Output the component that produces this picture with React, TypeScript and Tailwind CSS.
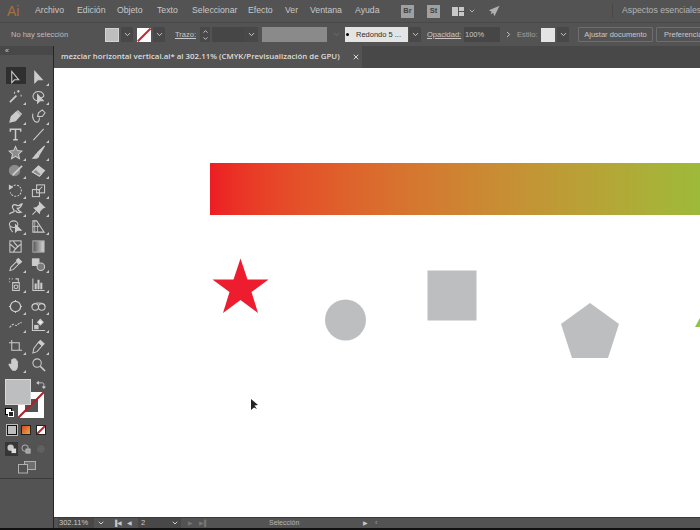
import type { ReactNode } from "react";
import { ChevronDown, ChevronUp, ChevronRight, X } from "lucide-react";

const ui = "font-['Liberation_Sans',Arial,sans-serif]";

const Ico = ({ children, corner = true }: { children: ReactNode; corner?: boolean }) => (
  <div className="relative w-[20px] h-[18px] flex items-center justify-center">
    <svg width="15" height="15" viewBox="0 0 16 16" fill="none" stroke="#cccccc" strokeWidth="1.1">
      {children}
    </svg>
    {corner && <span className="absolute right-[-1px] bottom-0 w-0 h-0 border-l-[3px] border-l-transparent border-b-[3px] border-b-[#c8c8c8]" />}
  </div>
);

const F = "#cccccc";

const rows: ReactNode[][] = [
  [
    <Ico corner={false}><path d="M4 1.500v12l3-3 4.500 0z" /></Ico>,
    <Ico><path d="M4 1.500v12l3-3 5 0z" fill={F} /></Ico>,
  ],
  [
    <Ico><path d="M2 14 9 7" strokeWidth="1.800" /><path d="M11 1v3M9.500 2.500h3M14 6v2M7 3v2" /></Ico>,
    <Ico><path d="M8 13C2 12 1 8 3 5s8-3 10 0-1 5-4 4" /><path d="M7 6v9l2.500-2.500H13z" fill={F} /></Ico>,
  ],
  [
    <Ico><path d="M2 14l1.500-6L9 3l4 4-5 5.500z" fill={F} /><path d="M10 1.500l4.500 4.500" strokeWidth="1.600" /></Ico>,
    <Ico><path d="M2 5c-1 4 1 9 4 9s3-3 3-5" /><path d="M7 8l1-4 4-3 3 3-3 4z" /></Ico>,
  ],
  [
    <Ico><path d="M2.500 5V2.500h11V5M8 2.500v11M5.500 13.500h5" strokeWidth="1.600" /></Ico>,
    <Ico><path d="M2.500 14 13.500 2" /></Ico>,
  ],
  [
    <Ico><path d="M8 1.500l2 4.500 4.800.5-3.600 3.200 1 4.800L8 12l-4.200 2.500 1-4.800L1.200 6.500 6 6z" fill="#8d8d8d" /></Ico>,
    <Ico><path d="M14.500 1 7 8l2 2z" fill={F} /><path d="M6.500 9c-2 .5-1.500 3-4.500 5 3 .5 6-.5 6.500-3z" fill={F} /></Ico>,
  ],
  [
    <Ico><circle cx="7" cy="8" r="5.500" fill="#8d8d8d" stroke="#8d8d8d" /><path d="M5 13 15 3" strokeWidth="1.800" /></Ico>,
    <Ico><path d="M1.500 9.500 8 3l6.500 5-5.500 6z" fill={F} /><path d="M1.500 9.500 5 6.500l6 5.500-2 2z" fill="#8d8d8d" /></Ico>,
  ],
  [
    <Ico><path d="M3.500 4.500A6 6 0 1 1 2.500 10" strokeDasharray="2 1.300" /><path d="M1.500 2.500l3 2-3 2z" fill={F} /></Ico>,
    <Ico><rect x="1.500" y="7" width="7.500" height="7.500" /><rect x="6" y="2" width="8.500" height="8.500" /><path d="M8 8l4-4" /></Ico>,
  ],
  [
    <Ico><path d="M1.500 14c2-3 4-1 5-3S3 8 5 5s4 0 6 0 2-2 4-2c-1 3-3 5-5 5 1 2 2 3 4 4-3 1-5 0-6-2" strokeWidth="1.400" /></Ico>,
    <Ico><path d="M9 1.500l5.500 5.500-2 .5-3 3-.5 2.500L3.500 7.500 6 7l3-3z" fill={F} /><path d="M5.500 10.500 1.500 14.500" /></Ico>,
  ],
  [
    <Ico><ellipse cx="6" cy="5.500" rx="4.500" ry="3.500" /><path d="M5 14c-1-2-3-3-3-6" /><path d="M8 6v8l2-2h4z" fill={F} /></Ico>,
    <Ico><path d="M2 2v12h12L6 2z" /><path d="M2 8l7 0M4 2v12M7 6v8" strokeWidth=".8" /></Ico>,
  ],
  [
    <Ico corner={false}><rect x="2" y="2" width="12" height="12" /><path d="M2 6c3 0 4 4 6 4s3-4 6-4M6 2c0 3 4 4 4 6s-4 3-4 6" strokeWidth="1.200" /></Ico>,
    <Ico corner={false}>
      <defs>
        <linearGradient id="toolgrad" x1="0" x2="1">
          <stop offset="0" stopColor="#555555" />
          <stop offset="1" stopColor="#d8d8d8" />
        </linearGradient>
      </defs>
      <rect x="2" y="2" width="12" height="12" fill="url(#toolgrad)" stroke="#aaaaaa" />
    </Ico>,
  ],
  [
    <Ico><path d="M2 14.500l1-3.500 6-6 2.500 2.500-6 6z" /><path d="M9 3.500l2-2 3.500 3.500-2 2z" fill={F} /></Ico>,
    <Ico><rect x="1.500" y="2" width="7" height="7" fill={F} /><circle cx="10.500" cy="10.500" r="4" fill="#7a7a7a" /></Ico>,
  ],
  [
    <Ico><path d="M1 2h1M4 2h1M1 5h1M8 2h3v3M5 6h7v8.500H5z" /><circle cx="8.500" cy="10.500" r="2" /></Ico>,
    <Ico><path d="M2 1.500v13h12.500" /><path d="M5 13V7M8 13V3M11 13V6" strokeWidth="2.200" /></Ico>,
  ],
  [
    <Ico><circle cx="8" cy="8" r="5.500" strokeWidth="1.400" /><path d="M8 1v2M1 8h2M13 8h2M8 13v2" /></Ico>,
    <Ico><circle cx="4.500" cy="8.500" r="3.500" /><circle cx="11.500" cy="8.500" r="3.500" /><path d="M1 8c0-5 14-5 14 0" /></Ico>,
  ],
  [
    <Ico><path d="M1.500 11c2-1 3-4 5-3s2 2 4 0 3-2 4-2" strokeDasharray="2.500 1" /></Ico>,
    <Ico><path d="M1.500 2v12.500H15" /><rect x="4" y="9" width="3.500" height="3.500" fill={F} /><path d="M10 2.500l3 3-3 3-3-3z" fill="#eeeeee" /></Ico>,
  ],
  [
    <Ico><path d="M4 1v11h11M1 4h11v8" /></Ico>,
    <Ico><path d="M2 15l1-5 5-6.500 4 3.500-5.500 6.500z" /><path d="M8 3.500l2-2 4 3.500-2 2z" fill={F} /></Ico>,
  ],
  [
    <Ico>
      <path d="M5 14c-2-2-3-4-4-6 1-1 2 0 3 1V3.500c0-1 1.500-1 1.500 0V7V2.500c0-1 1.500-1 1.500 0V7V3c0-1 1.500-1 1.500 0v4.500V5c0-1 1.500-1 1.500 0v5c0 2-1 3-2 4z" fill={F} />
    </Ico>,
    <Ico corner={false}><circle cx="6.500" cy="6.500" r="4.500" /><path d="M10 10l5 5" strokeWidth="1.600" /></Ico>,
  ],
];

// vertical gap above each row, read off the reference
const tops = [
  "mt-0", "mt-px", "mt-[2px]", "mt-0", "mt-0", "mt-0", "mt-[2px]", "mt-0",
  "mt-0", "mt-[2px]", "mt-0", "mt-[2px]", "mt-[4px]", "mt-0", "mt-[4px]", "mt-0",
];

const Toolbar = () => (
  <aside className="w-[54px] shrink-0 bg-[#535353] border-r-[1px] border-r-[#262626] flex flex-col">
    <div className="h-[9px] bg-[#484848] text-[7px] leading-[9px] text-[#cfcfcf] pl-[5px] tracking-[-1px]">«</div>
    <div className="h-[13px]" />
    <div className="flex flex-col px-[5px]">
      {rows.map((r, i) => (
        <div key={i} className={`flex justify-between ${tops[i]} ${i === 0 ? "relative" : ""}`}>
          {i === 0 && <span className="absolute left-[1px] -top-[1px] w-[20px] h-[17px] bg-[#2f2f2f]" />}
          <div className="relative">{r[0]}</div>
          <div className="relative">{r[1]}</div>
        </div>
      ))}
    </div>
    <div className="relative h-[41px] mt-[6px] ml-[5px]">
      <div className="relative w-[40px] h-[40px]">
        <div className="absolute left-[13px] top-[13px] w-[26px] h-[26px] bg-white flex items-center justify-center overflow-hidden">
          <span className="w-[13px] h-[13px] bg-[#535353]" />
          <span className="absolute left-[-6px] top-[12px] w-[38px] h-[2px] bg-[#a8232a] -rotate-45" />
        </div>
        <div className="absolute left-0 top-0 w-[26px] h-[26px] bg-[#bcbec0] border-[1px] border-[#d8d8d8]" />
        <svg className="absolute left-[31px] top-[1px]" width="10" height="10" viewBox="0 0 14 12" fill="none" stroke="#cccccc" strokeWidth="1.200">
          <path d="M2 3h7c1.500 0 2 1 2 2v4" />
          <path d="M1 3l2.500-2v4zM11 11l-2-2.500h4z" fill="#cccccc" />
        </svg>
        <div className="absolute left-0 top-[29px] w-[7px] h-[7px] bg-white border-[1px] border-black" />
        <div className="absolute left-[3px] top-[32px] w-[6px] h-[6px] bg-[#222222] border-[1px] border-white" />
      </div>
    </div>
    <div className="flex mt-[5px] ml-[7px]">
      <span className="w-[10px] h-[10px] bg-[#bcbec0] border-[1px] border-[#111111] outline-[1px] outline-[#bbbbbb]" />
      <span className="ml-[4px] w-[10px] h-[10px] bg-gradient-to-br from-[#d8412a] to-[#e2a93b] border-[1px] border-[#222222]" />
      <span className="relative ml-[5px] w-[10px] h-[10px] bg-white border-[1px] border-[#222222] overflow-hidden">
        <span className="absolute left-[-3px] top-[3px] w-[14px] h-[2px] bg-[#c1272d] -rotate-45" />
      </span>
    </div>
    <div className="flex items-center mt-[7px] ml-[5px] h-[14px]">
      <div className="w-[13px] h-[14px] bg-[#363636] flex items-center justify-center">
        <svg width="10" height="10" viewBox="0 0 11 11"><circle cx="4" cy="4" r="3.500" fill="#c8c8c8" /><rect x="5" y="5" width="5" height="5" fill="#dddddd" /></svg>
      </div>
      <div className="w-[15px] flex justify-center">
        <svg width="10" height="10" viewBox="0 0 11 11" fill="none" stroke="#bbbbbb"><circle cx="4.500" cy="4.500" r="3.500" /><rect x="5.500" y="5.500" width="4.500" height="4.500" fill="#a0a0a0" /></svg>
      </div>
      <div className="w-[15px] flex justify-center">
        <svg width="8" height="8" viewBox="0 0 9 9" fill="none" stroke="#6f6f6f"><circle cx="4.500" cy="4.500" r="3.500" /><circle cx="4.500" cy="4.500" r="1.500" /></svg>
      </div>
    </div>
    <div className="mt-[5px] ml-[18px]">
      <svg className="block" width="18" height="13" viewBox="0 0 18 13" fill="none" stroke="#b0b0b0">
        <rect x="6.500" y=".5" width="11" height="8" fill="#6e6e6e" />
        <rect x=".5" y="3.500" width="9" height="8.500" fill="#535353" />
      </svg>
    </div>
    <div className="h-px bg-[#3c3c3c] mt-[4px]" />
  </aside>
);

const Chev = ({ className = "" }: { className?: string }) => (
  <span className={`w-[12px] h-[15px] bg-[#484848] flex items-center justify-center ${className}`}>
    <ChevronDown size={9} strokeWidth={2.5} color="#d0d0d0" />
  </span>
);

const menus = [
  { label: "Archivo", cls: "w-[42px]" },
  { label: "Edición", cls: "w-[40px]" },
  { label: "Objeto", cls: "w-[40px]" },
  { label: "Texto", cls: "w-[35px]" },
  { label: "Seleccionar", cls: "w-[56px]" },
  { label: "Efecto", cls: "w-[37px]" },
  { label: "Ver", cls: "w-[25px]" },
  { label: "Ventana", cls: "w-[45px]" },
  { label: "Ayuda", cls: "w-[35px]" },
];

const MenuBar = () => (
  <header className="h-[22px] bg-[#535353] flex items-center text-[8.700px] text-[#c8c8c8] whitespace-nowrap [&>*]:shrink-0">
    <span className="ml-[7px] w-[28px] text-[14px] text-[#a8703f] leading-none">Ai</span>
    {menus.map((m) => (
      <span key={m.label} className={m.cls}>{m.label}</span>
    ))}
    <span className="w-[13px] h-[13px] ml-[11px] bg-[#a0a0a0] text-[#3f3f3f] text-[7.500px] font-bold flex items-center justify-center">Br</span>
    <span className="ml-[13px] w-[13px] h-[13px] bg-[#a0a0a0] text-[#3f3f3f] text-[7.500px] font-bold flex items-center justify-center">St</span>
    <span className="ml-[12px] flex gap-px w-[12px] h-[9px]">
      <span className="w-[6px] bg-[#c8c8c8]" />
      <span className="flex-1 flex flex-col gap-px">
        <span className="flex-1 bg-[#c8c8c8]" />
        <span className="flex-1 bg-[#c8c8c8]" />
      </span>
    </span>
    <ChevronDown className="ml-[4px]" size={8} strokeWidth={2.5} color="#c0c0c0" />
    <svg className="ml-[12px]" width="12" height="12" viewBox="0 0 14 14" fill="#b0b0b0">
      <path d="M13.500 1 1 6l3 1.500L3.500 11 6 9l1.500 4z" />
    </svg>
    <span className="w-px h-[14px] bg-[#474747] ml-[112px]" />
    <span className="ml-[9px] text-[#b4b4b4]">Aspectos esenciales</span>
  </header>
);

const ControlBar = () => (
  <div className="h-[24px] bg-[#535353] border-t-[1px] border-t-[#484848] flex items-center text-[7.500px] text-[#c8c8c8] whitespace-nowrap overflow-hidden [&>*]:shrink-0">
    <span className="ml-[11px] w-[94px] text-[#bcbcbc]">No hay selección</span>
    <span className="w-[14px] h-[14px] bg-[#bcbec0] border-[1px] border-[#d4d4d4]" />
    <Chev className="ml-[2px]" />
    <span className="relative ml-[4px] w-[14px] h-[14px] bg-white overflow-hidden">
      <span className="absolute left-[-2px] top-[6px] w-[18px] h-[1.500px] bg-[#c1272d] -rotate-45" />
    </span>
    <Chev className="ml-[2px]" />
    <span className="ml-[10px] w-[20px] underline">Trazo:</span>
    <span className="ml-[5px] w-[10px] h-[15px] bg-[#484848] flex flex-col items-center justify-center">
      <ChevronUp size={7} strokeWidth={3} color="#d0d0d0" />
      <ChevronDown size={7} strokeWidth={3} color="#d0d0d0" />
    </span>
    <span className="ml-[2px] w-[32px] h-[15px] bg-[#464646]" />
    <Chev className="ml-0 w-[14px]" />
    <span className="ml-[4px] w-[65px] h-[15px] bg-[#8a8a8a]" />
    <span className="w-[18px] h-[15px] flex items-center justify-center">
      <ChevronDown size={9} strokeWidth={2.5} color="#6f6f6f" />
    </span>
    <span className="w-[63px] h-[15px] bg-[#e4e4e4] text-[#2e2e2e] flex items-center">
      <span className="ml-[1px] w-[3px] h-[3px] rounded-full bg-black" />
      <span className="ml-[7px]">Redondo 5 ...</span>
    </span>
    <Chev className="ml-[1px]" />
    <span className="ml-[6px] w-[32px] underline">Opacidad:</span>
    <span className="ml-[5px] w-[36px] h-[15px] pl-[1px] bg-[#464646] flex items-center">100%</span>
    <span className="w-[17px] flex justify-center"><ChevronRight size={9} strokeWidth={2.5} color="#d0d0d0" /></span>
    <span className="w-[19px] text-[#a0a0a0]">Estilo:</span>
    <span className="ml-[5px] w-[14px] h-[14px] bg-[#e4e4e4]" />
    <Chev className="ml-[2px]" />
    <span className="ml-[9px] w-[75px] h-[15px] border-[1px] border-[#6e6e6e] rounded-[1px] flex items-center justify-center">Ajustar documento</span>
    <span className="ml-[3px] pl-[7px] w-[60px] h-[15px] border-[1px] border-[#6e6e6e] rounded-[1px] flex items-center overflow-hidden">Preferencias</span>
  </div>
);

const Canvas = () => (
  <div className="relative flex-1 bg-white overflow-hidden">
    <div className="absolute left-[156px] top-[95px] w-[490px] h-[52px] bg-gradient-to-r from-[#ed1c24] via-[#cf8232] to-[#9dba3a]" />
    <svg className="absolute left-0 top-0" width="646" height="449" viewBox="0 0 646 449">
      <path d="M186.500 190.500 193.500 211.500H214.500L197.500 224 204 245 186.500 232 169 245 175.500 224 158.500 211.500H179.500Z" fill="#ed1c2e" />
      <circle cx="291.500" cy="252" r="20.500" fill="#bcbec0" />
      <rect x="373.500" y="202.500" width="49" height="50" fill="#bcbec0" />
      <path d="M536 235 565 256 554 290H518L507 256Z" fill="#bcbec0" />
      <path d="M646 250V259H641Z" fill="#8cc63f" />
      <path d="M197 331V342L200 339.500 203 341 200.500 337.500 204 337Z" fill="#222222" />
    </svg>
  </div>
);

const StatusBar = () => (
  <div className="h-[11px] bg-[#535353] border-t-[1px] border-t-[#3a3a3a] flex items-center text-[7.500px] text-[#c8c8c8] whitespace-nowrap [&>*]:shrink-0">
    <span className="ml-[4px] w-[36px] h-[10px] bg-[#484848] pl-px leading-[10px]">302.11%</span>
    <span className="w-[14px] flex justify-center"><ChevronDown size={8} strokeWidth={3} color="#d0d0d0" /></span>
    <span className="ml-[5px] w-[14px] text-[6px]">▐◀</span>
    <span className="w-[10px] text-[6px]">◀</span>
    <span className="ml-[1px] w-[30px] h-[10px] bg-[#484848] pl-[3px] leading-[10px]">2</span>
    <span className="w-[13px] h-[10px] bg-[#484848] flex justify-center items-center"><ChevronDown size={8} strokeWidth={3} color="#d0d0d0" /></span>
    <span className="ml-[7px] w-[11px] text-[6px] text-[#777777]">▶</span>
    <span className="w-[70px] text-[6px] text-[#777777]">▶▌</span>
    <span className="w-[94px] text-[#b4b4b4] text-[7px]">Selección</span>
    <span className="w-[12px] text-[6px]">▶</span>
    <span className="text-[#a0a0a0]">‹</span>
  </div>
);

export default function App() {
  return (
    <div className={`w-[700px] h-[530px] overflow-hidden flex flex-col bg-[#535353] ${ui}`}>
      <MenuBar />
      <ControlBar />
      <div className="flex-1 flex min-h-0">
        <Toolbar />
        <div className="flex-1 flex flex-col min-w-0">
          <div className="h-[22px] bg-[#484848] flex items-center">
            <div className="w-[308px] h-full bg-[#535353] flex items-center pl-[7px] font-['Open_Sans',sans-serif] text-[7.850px] font-semibold text-[#dcdcdc] whitespace-nowrap">
              mezclar horizontal vertical.ai* al 302.11% (CMYK/Previsualización de GPU)
              <X className="ml-[12px] shrink-0" size={8} strokeWidth={3} color="#d8d8d8" />
            </div>
          </div>
          <Canvas />
          <StatusBar />
        </div>
      </div>
      <div className="h-[2px] bg-[#111111]" />
    </div>
  );
}
